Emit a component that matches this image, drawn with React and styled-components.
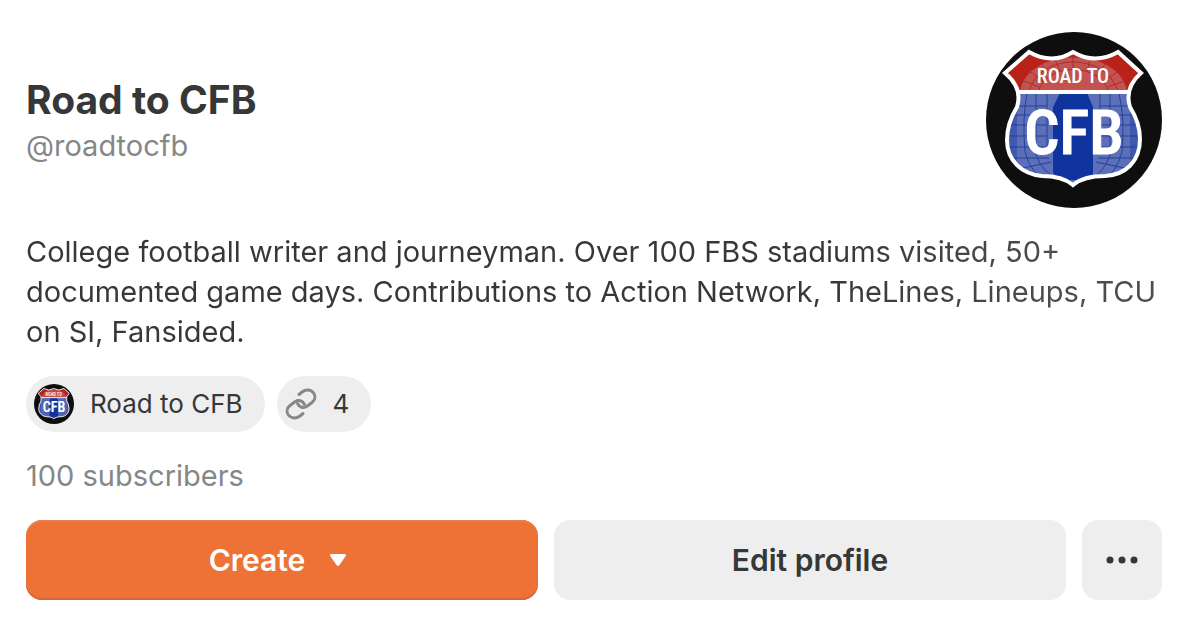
import styled, { createGlobalStyle } from 'styled-components';

const GlobalStyle = createGlobalStyle`
  * {
    box-sizing: border-box;
  }

  body {
    margin: 0;
    background: #fff;
    color: #363737;
    font-family: Inter, sans-serif;
    font-size: 29px;
    line-height: 40px;
  }
`;

const Profile = styled.main`
  display: flex;
  flex-direction: column;
  padding: 32px 34px 22px 26px;
`;

const Header = styled.header`
  display: flex;
  align-items: center;
  justify-content: space-between;
  margin-bottom: 24px;
`;

const Name = styled.h1`
  margin: 0;
  font-size: 39px;
  line-height: 52px;
  font-weight: 700;
`;

const Handle = styled.p`
  margin: 0;
  color: #868787;
`;

const Bio = styled.p`
  margin: 0 0 24px;
  background: linear-gradient(to right, #363737 70%, #4c4c4c 90%);
  background-clip: text;
  color: transparent;
`;

const ChipRow = styled.div`
  display: flex;
  gap: 12px;
  margin-bottom: 24px;
`;

const Chip = styled.a`
  display: flex;
  align-items: center;
  gap: 16px;
  height: 56px;
  padding: 0 22px 0 8px;
  border-radius: 28px;
  background: #eee;
  color: inherit;
  font-size: 26px;
  text-decoration: none;
`;

const Subscribers = styled.a`
  align-self: flex-start;
  margin-bottom: 24px;
  color: #868787;
  text-decoration: none;
`;

const Actions = styled.div`
  display: flex;
  gap: 16px;
`;

const Button = styled.button`
  flex: ${({ $square }) => ($square ? '0 0 80px' : '1 1 0')};
  display: flex;
  align-items: center;
  justify-content: center;
  gap: 24px;
  height: 80px;
  padding: 0;
  border: none;
  border-radius: 16px;
  background: ${({ $primary }) => ($primary ? '#ee7135' : '#eee')};
  box-shadow: ${({ $primary }) =>
    $primary ? 'inset 0 2px 0 #e97f50, inset 0 -2px 0 #d46639' : 'none'};
  color: ${({ $primary }) => ($primary ? '#fff' : '#363737')};
  font: inherit;
  font-size: 30px;
  font-weight: 600;
  cursor: pointer;
`;

const CaretSvg = styled.svg`
  width: 18px;
  height: 14px;
  margin-right: 8px;
`;

const LogoSvg = styled.svg`
  display: block;
  flex: none;
  width: ${({ $size }) => $size}px;
  height: ${({ $size }) => $size}px;
  border-radius: 50%;
`;

const SHIELD =
  'M43 20 Q66 33 87 20 Q109 33 132 20 L155 41 Q138 56 144 75 Q154 91 154 107 C154 130 139 143 119 144 C104 144 94 147 87 153 C80 147 70 144 56 144 C36 142 21 129 21 108 Q21 91 31 75 Q37 56 19 41 Z';

const Logo = ({ size, id }) => (
  <LogoSvg $size={size} viewBox="0 0 176 176" role="img" aria-label="Road to CFB">
    <defs>
      <clipPath id={id}>
        <path d={SHIELD} />
      </clipPath>
    </defs>
    <rect width="176" height="176" fill="#0e0e0e" />
    <g clipPath={`url(#${id})`}>
      <rect width="176" height="60" fill="#b92219" />
      <path d="M34 60 C40 14 135 14 141 60 Z" fill="#c35350" />
      <g fill="none" stroke="#aa2d2b" strokeWidth="1">
        <path d="M43 60 C53 20 121 20 132 60 M52 60 C61 30 113 30 123 60" />
        <path d="M35 48 L53 55 M42 38 L58 50 M53 29 L65 45 M68 25 L74 39 M87 22 V38 M105 25 L101 39 M121 29 L110 45 M134 38 L117 50 M141 48 L122 55" />
      </g>
      <rect y="60" width="176" height="116" fill="#5c6fb9" />
      <path d="M19 66 H31 V136 H19 Z M144 66 H156 V136 H144 Z" fill="#4058ad" />
      <g fill="none" stroke="#24409b" strokeWidth="1">
        <path d="M41 61 Q36 88 39 120 Q45 142 62 150 M50 61 V123 Q57 142 75 148 M61 61 V120 M133 61 Q139 88 136 120 Q130 142 114 150 M124 61 V123 Q118 142 101 148 M114 61 V120" />
        <path d="M32 74 H61 M28 83 H61 M24 93 H61 M22 104 H61 M22 115 H61 M24 126 H63 M32 137 L65 130 M114 74 H144 M114 83 H147 M114 93 H151 M114 104 H154 M114 115 H154 M112 126 H152 M110 130 L143 137" />
      </g>
      <path d="M74 61 H101 L107 75 V142 L100 148 H75 L67 141 V75 Z" fill="#10349e" />
      <path d="M20 60 H156" stroke="#fff" strokeWidth="4" />
    </g>
    <path d={SHIELD} fill="none" stroke="#fff" strokeWidth="4" />
    <g
      fill="#fff"
      stroke="#fff"
      textAnchor="middle"
      fontFamily="'Roboto Condensed', 'Liberation Sans Narrow', sans-serif"
      fontWeight="500"
    >
      <text x="87" y="51" fontSize="20" strokeWidth="0">ROAD TO</text>
      <text x="88" y="122" fontSize="62" strokeWidth="1">CFB</text>
    </g>
  </LogoSvg>
);

const LinkIcon = () => (
  <svg width="32" height="32" viewBox="0 0 32 32" fill="none" stroke="#868787" strokeWidth="3" strokeLinecap="round" aria-hidden="true">
    <path d="M14 6.5 L17 4 C21 1 26 1.5 28.5 4.8 C31 8 30 12 27 14.5 L22 18.2 C18.5 20.5 14.5 19.5 12.5 15.5" />
    <path d="M18 25.5 L15 28 C11 31 6 30.5 3.5 27.2 C1 24 2 20 5 17.5 L10 13.8 C13.5 11.5 17.5 12.5 19.5 16.5" />
  </svg>
);

const CaretIcon = () => (
  <CaretSvg viewBox="0 0 18 14" fill="#fff" aria-hidden="true">
    <path d="M2.5 1 H15.5 Q18 1 16.5 3.2 L10.5 12 Q9 14 7.5 12 L1.5 3.2 Q0 1 2.5 1 Z" />
  </CaretSvg>
);

const MoreIcon = () => (
  <svg width="32" height="8" viewBox="0 0 32 8" fill="#363737" aria-hidden="true">
    <circle cx="4" cy="4" r="3.5" />
    <circle cx="16" cy="4" r="3.5" />
    <circle cx="28" cy="4" r="3.5" />
  </svg>
);

const App = () => {
  return (
    <>
      <GlobalStyle />
      <Profile>
        <Header>
          <div>
            <Name>Road to CFB</Name>
            <Handle>@roadtocfb</Handle>
          </div>
          <Logo size={176} id="shield-large" />
        </Header>

        <Bio>
          College football writer and journeyman. Over 100 FBS stadiums visited, 50+ documented
          game days. Contributions to Action Network, TheLines, Lineups, TCU on SI, Fansided.
        </Bio>

        <ChipRow>
          <Chip href="#publication">
            <Logo size={40} id="shield-small" />
            Road to CFB
          </Chip>
          <Chip href="#links" aria-label="4 links">
            <LinkIcon />
            4
          </Chip>
        </ChipRow>

        <Subscribers href="#subscribers">100 subscribers</Subscribers>

        <Actions>
          <Button type="button" $primary>
            Create
            <CaretIcon />
          </Button>
          <Button type="button">Edit profile</Button>
          <Button type="button" $square aria-label="More options">
            <MoreIcon />
          </Button>
        </Actions>
      </Profile>
    </>
  );
};

export default App;
